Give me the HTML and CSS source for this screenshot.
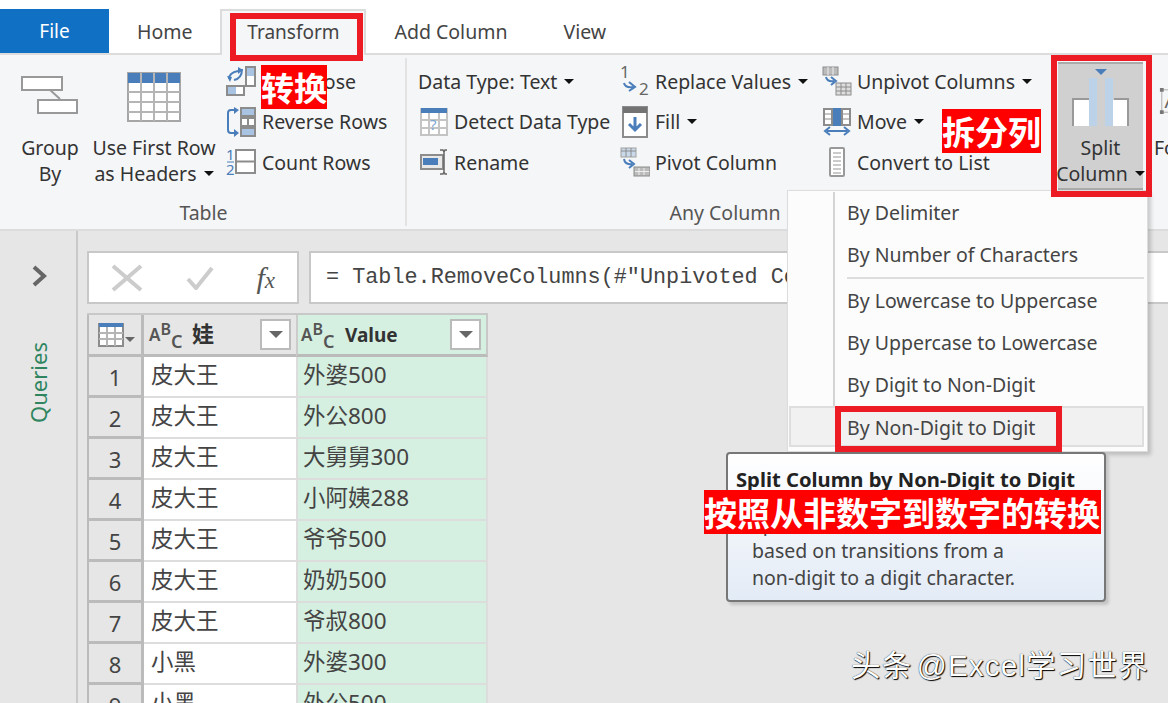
FILE: index.html
```html
<!DOCTYPE html>
<html lang="en">
<head>
<meta charset="utf-8">
<title>Split Column</title>
<link rel="stylesheet" href="styles.css">
</head>
<body>
<div class="app">
  <nav class="tabs">
    <div class="tab file">File</div>
    <div class="tab">Home</div>
    <div class="tab active">Transform</div>
    <div class="tab">Add Column</div>
    <div class="tab">View</div>
  </nav>

  <section class="ribbon">
    <div class="group table-group">
      <div class="group-body">
        <div class="big groupby">
          <div class="big-icon">
            <svg width="60" height="40" viewBox="0 0 60 40"><path d="M29 14 40 24" stroke="#999" stroke-width="2" fill="none"/><rect x="2" y="2" width="40" height="13" fill="#fff" stroke="#999" stroke-width="2"/><rect x="18" y="25" width="39" height="13" fill="#fff" stroke="#999" stroke-width="2"/></svg>
          </div>
          <div class="big-label">Group<br>By</div>
        </div>
        <div class="big firstrow">
          <div class="big-icon top">
            <svg width="54" height="50" viewBox="0 0 54 50"><rect x="1" y="1" width="52" height="48" fill="#fff" stroke="#a6a6a6" stroke-width="2"/><rect x="1" y="1" width="52" height="10" fill="#4a7ebb"/><path d="M14 1V49M27 1V49M40 1V49M1 20H53M1 30H53M1 40H53" stroke="#b5b5b5" stroke-width="2" fill="none"/></svg>
          </div>
          <div class="big-label">Use First Row<br>as Headers <i class="caret"></i></div>
        </div>
        <div class="col col-table">
          <div class="row">
            <svg class="ico" width="30" height="30" viewBox="0 0 30 30"><path d="M3 13C3 8 7 6 12 5M16 3C16 10 13 13 8 14" fill="none" stroke="#4a7ebb" stroke-width="2"/><path d="M12 1l5 3-5 4zM1 10l5 1-2 5z" fill="#4a7ebb"/><rect x="20" y="1" width="9" height="19" fill="#fff" stroke="#8c8c8c" stroke-width="2"/><rect x="21" y="2" width="7" height="8" fill="#a9c4e2"/><rect x="1" y="20" width="17" height="9" fill="#fff" stroke="#8c8c8c" stroke-width="2"/><rect x="2" y="21" width="8" height="7" fill="#a9c4e2"/></svg>
            <span>Transpose</span>
          </div>
          <div class="row">
            <svg class="ico" width="30" height="30" viewBox="0 0 30 30"><path d="M9 3H5Q2 3 2 6V23Q2 26 5 26H9" fill="none" stroke="#4a7ebb" stroke-width="2"/><path d="M8 0l5 3-5 4zM8 22l5 4-5 4z" fill="#4a7ebb"/><rect x="15" y="1" width="14" height="8" fill="#a9c4e2" stroke="#8c8c8c" stroke-width="2"/><rect x="15" y="11" width="14" height="8" fill="#fff" stroke="#8c8c8c" stroke-width="2"/><path d="M22 11V19" stroke="#8c8c8c" stroke-width="2"/><rect x="15" y="21" width="14" height="8" fill="#a9c4e2" stroke="#8c8c8c" stroke-width="2"/></svg>
            <span>Reverse Rows</span>
          </div>
          <div class="row">
            <svg class="ico" width="30" height="30" viewBox="0 0 30 30"><text x="0" y="13" class="ico-num">1</text><text x="0" y="28" class="ico-num">2</text><path d="M1 15H8" stroke="#4a7ebb" stroke-width="1"/><rect x="10" y="3" width="19" height="23" fill="#fff" stroke="#8c8c8c" stroke-width="2"/><path d="M10 14.500H29" stroke="#8c8c8c" stroke-width="2"/></svg>
            <span>Count Rows</span>
          </div>
        </div>
      </div>
      <div class="group-label">Table</div>
    </div>

    <div class="group any-group">
      <div class="group-body">
        <div class="col col-a">
          <div class="row"><span>Data Type: Text <i class="caret"></i></span></div>
          <div class="row">
            <svg class="ico narrow" width="28" height="30" viewBox="0 0 28 30"><rect x="1" y="2" width="26" height="26" fill="#fff" stroke="#c4c4c4" stroke-width="2"/><rect x="1" y="1" width="26" height="5" fill="#4a7ebb"/><path d="M9 6V28M19 6V28M1 13H27M1 21H27" stroke="#c4c4c4" stroke-width="2"/><text x="10" y="23" class="ico-q">?</text></svg>
            <span>Detect Data Type</span>
          </div>
          <div class="row">
            <svg class="ico narrow" width="28" height="26" viewBox="0 0 28 26"><rect x="1" y="6" width="22" height="14" fill="#e8e8e8" stroke="#8c8c8c" stroke-width="2"/><rect x="3" y="9" width="15" height="7" fill="#4a7ebb"/><path d="M20 1h3l1 2 1-2h2M24 3V23M20 25h3l1-2 1 2h2" fill="none" stroke="#666" stroke-width="1.500"/></svg>
            <span>Rename</span>
          </div>
        </div>
        <div class="col col-b">
          <div class="row">
            <svg class="ico" width="30" height="30" viewBox="0 0 30 30"><text x="0" y="12" class="ico-num grey">1</text><text x="19" y="29" class="ico-num grey">2</text><path d="M4 17Q5 22 13 21M9 16l6 5-6 4" fill="none" stroke="#4a7ebb" stroke-width="2"/></svg>
            <span>Replace Values <i class="caret"></i></span>
          </div>
          <div class="row">
            <svg class="ico" width="30" height="32" viewBox="0 0 26 32"><rect x="1" y="1" width="24" height="30" fill="#fff" stroke="#8c8c8c" stroke-width="2"/><rect x="1" y="1" width="24" height="6" fill="#737373"/><path d="M13 11V24M7 18l6 6 6-6" fill="none" stroke="#4a7ebb" stroke-width="3"/></svg>
            <span>Fill <i class="caret"></i></span>
          </div>
          <div class="row">
            <svg class="ico" width="30" height="30" viewBox="0 0 30 30"><rect x="1" y="1" width="15" height="9" fill="#c9d9ea" stroke="#a0a0a0"/><path d="M1 4H16M6 1V10M11 1V10" stroke="#8c8c8c"/><path d="M4 12Q5 18 12 17M9 13l5 4-5 4" fill="none" stroke="#4a7ebb" stroke-width="2"/><rect x="14" y="20" width="16" height="9" fill="#bbb" stroke="#8c8c8c"/><path d="M19 21V28M24 21V28M15 24.500H29" stroke="#eee"/></svg>
            <span>Pivot Column</span>
          </div>
        </div>
        <div class="col col-c">
          <div class="row">
            <svg class="ico" width="30" height="30" viewBox="0 0 30 30"><rect x="1" y="1" width="15" height="8" fill="#bbb" stroke="#8c8c8c"/><path d="M6 1V9M11 1V9" stroke="#eee"/><path d="M4 11Q5 16 12 15M9 11l5 4-5 4" fill="none" stroke="#4a7ebb" stroke-width="2"/><rect x="14" y="17" width="15" height="12" fill="#ddd" stroke="#8c8c8c"/><path d="M19 17V29M24 17V29M14 21H29M14 25H29" stroke="#8c8c8c"/></svg>
            <span>Unpivot Columns <i class="caret"></i></span>
          </div>
          <div class="row">
            <svg class="ico" width="30" height="30" viewBox="0 0 30 30"><path d="M2 2H10V18H2ZM20 2H28V18H20Z" fill="#fff" stroke="#8c8c8c" stroke-width="2"/><path d="M2 7H10M20 7H28M2 12H10M20 12H28" stroke="#8c8c8c"/><rect x="11" y="1" width="8" height="18" fill="#4a7ebb"/><path d="M5 24H25M8 20l-5 4 5 4M22 20l5 4-5 4" fill="none" stroke="#4a7ebb" stroke-width="2"/></svg>
            <span>Move <i class="caret"></i></span>
          </div>
          <div class="row">
            <svg class="ico" width="30" height="30" viewBox="0 0 30 30"><rect x="8" y="1" width="14" height="28" rx="1" fill="#fff" stroke="#999" stroke-width="2"/><path d="M11 6H19M11 10H19M11 14H19M11 18H19M11 22H19M11 26H19" stroke="#bbb" stroke-width="1.500"/></svg>
            <span>Convert to List</span>
          </div>
        </div>
      </div>
      <div class="group-label">Any Column</div>
    </div>

    <div class="split">
      <div class="big-icon">
        <svg width="60" height="60" viewBox="0 0 60 60"><path d="M24 0H36L30 6Z" fill="#4a7ebb"/><rect x="3" y="30" width="16" height="27" fill="#fff"/><path d="M2 57V30H19M57 57V30H43" fill="none" stroke="#999" stroke-width="2"/><rect x="41" y="31" width="15" height="26" fill="#fff"/><rect x="18" y="9" width="8" height="48" fill="#bcd2e8"/><rect x="34" y="9" width="8" height="48" fill="#bcd2e8"/></svg>
      </div>
      <div class="big-label">Split<br>Column <i class="caret"></i></div>
    </div>

    <div class="format">
      <svg class="format-icon" width="30" height="30" viewBox="0 0 30 30"><rect x="3" y="3" width="26" height="24" fill="none" stroke="#aaa"/><path d="M1 1h4v4H1zM1 25h4v4H1z" fill="#777"/><text x="6" y="23" class="format-a">A</text></svg>
      <div class="big-label">Format</div>
    </div>
  </section>

  <div class="work">
    <aside class="side">
      <svg class="chev" width="16" height="22" viewBox="0 0 16 22"><path d="M3 2 13 11 3 20" fill="none" stroke="#666" stroke-width="4"/></svg>
      <div class="queries">Queries</div>
    </aside>
    <main class="main">
      <div class="formula">
        <div class="fx-box">
          <svg width="32" height="28" viewBox="0 0 32 28"><path d="M2 2 30 26M30 2 2 26" stroke="#ccc" stroke-width="4" fill="none"/></svg>
          <svg width="28" height="24" viewBox="0 0 28 24"><path d="M2 13 10 22 26 2" stroke="#ccc" stroke-width="4" fill="none"/></svg>
          <span class="fx"><i>f</i><i class="x">x</i></span>
        </div>
        <div class="fx-input">= Table.RemoveColumns(#"Unpivoted Columns",{"属性"})</div>
      </div>
      <div class="grid">
        <div class="th corner">
          <svg width="26" height="24" viewBox="0 0 26 24"><rect x="1" y="1" width="24" height="22" fill="#fff" stroke="#8c8c8c" stroke-width="2"/><rect x="1" y="0" width="24" height="4" fill="#4a7ebb"/><path d="M9 4V23M17 4V23M1 10H25M1 16H25" stroke="#b5b5b5" stroke-width="2"/></svg>
          <i class="caret grey"></i>
        </div>
        <div class="th">
          <span class="abc">A<span class="b">B</span><span class="c">C</span></span>
          <span class="name cjk">娃</span>
          <span class="filter"><i class="caret wide"></i></span>
        </div>
        <div class="th value">
          <span class="abc">A<span class="b">B</span><span class="c">C</span></span>
          <span class="name">Value</span>
          <span class="filter"><i class="caret wide"></i></span>
        </div>

        <div class="num">1</div><div class="td">皮大王</div><div class="td val">外婆500</div>
        <div class="num">2</div><div class="td">皮大王</div><div class="td val">外公800</div>
        <div class="num">3</div><div class="td">皮大王</div><div class="td val">大舅舅300</div>
        <div class="num">4</div><div class="td">皮大王</div><div class="td val">小阿姨288</div>
        <div class="num">5</div><div class="td">皮大王</div><div class="td val">爷爷500</div>
        <div class="num">6</div><div class="td">皮大王</div><div class="td val">奶奶500</div>
        <div class="num">7</div><div class="td">皮大王</div><div class="td val">爷叔800</div>
        <div class="num">8</div><div class="td">小黑</div><div class="td val">外婆300</div>
        <div class="num">9</div><div class="td">小黑</div><div class="td val">外公500</div>
      </div>
    </main>
  </div>

  <div class="menu">
    <div class="item">By Delimiter</div>
    <div class="item">By Number of Characters</div>
    <div class="sep"><i></i></div>
    <div class="item">By Lowercase to Uppercase</div>
    <div class="item">By Uppercase to Lowercase</div>
    <div class="item">By Digit to Non-Digit</div>
    <div class="item hover">By Non-Digit to Digit</div>
  </div>

  <div class="tip">
    <div class="tip-title">Split Column by Non-Digit to Digit</div>
    <div class="tip-body">Split the selected column<br>based on transitions from a<br>non-digit to a digit character.</div>
  </div>

  <div class="box box-tab"></div>
  <div class="box box-split"></div>
  <div class="box box-item"></div>
  <div class="note note-1">转换</div>
  <div class="note note-2">拆分列</div>
  <div class="note note-3">按照从非数字到数字的转换</div>
  <div class="mark">头条 @Excel学习世界</div>
</div>
</body>
</html>
```
FILE: styles.css
```css
* { box-sizing: border-box; }
html, body { margin: 0; padding: 0; }
body { width: 1168px; height: 703px; overflow: hidden; background: #e6e6e6; }
.app {
  position: relative; width: 1168px; height: 703px; overflow: hidden;
  font-family: "Noto Sans", "Noto Sans CJK SC", sans-serif; font-size: 19.500px; color: #333;
  display: flex; flex-direction: column;
}
i { font-style: normal; }

.tabs { flex: none; height: 55px; padding-top: 9px; display: flex; background: #fff; border-bottom: 2px solid #dcdcdc; }
.tab { flex: none; padding: 0 28px; line-height: 45px; height: 44px; color: #444; }
.tab.file { width: 109px; padding: 0; text-align: center; background: #1070c4; color: #fff; font-size: 19px; }
.tab.active { width: 146px; padding: 0; text-align: center; height: 46px; line-height: 42px; background: #f5f6f7; border: 2px solid #dcdcdc; border-bottom: 0; font-size: 19px; }

.ribbon { flex: none; height: 176px; display: flex; background: #f5f6f7; border-bottom: 2px solid #dcdcdc; }
.group { flex: none; display: flex; flex-direction: column; }
.table-group { width: 407px; background: linear-gradient(#e3e3e3, #e3e3e3) no-repeat 405px 3px / 2px 168px; }
.table-group .group-body { padding-left: 21px; }
.any-group { width: 644px; }
.any-group .group-label { padding-right: 8px; }
.group-body { flex: 1; display: flex; min-height: 0; }
.group-label { flex: none; height: 32px; line-height: 32px; text-align: center; color: #555; }
.big { flex: none; display: flex; flex-direction: column; align-items: center; }
.big-icon { height: 80px; display: flex; align-items: center; justify-content: center; }
.big-icon.top { align-items: flex-start; padding-top: 17px; }
.big-label { line-height: 26px; text-align: center; white-space: nowrap; }
.groupby { width: 58px; }
.firstrow { width: 124px; margin-left: 13px; }
.col { flex: none; display: flex; flex-direction: column; padding-top: 6px; }
.col-table { margin-left: 10px; }
.row { height: 40.500px; display: flex; align-items: center; white-space: nowrap; }
.ico { flex: none; margin-right: 6px; }
.ico.narrow { margin: 0 6px 0 2px; }
.col-b .ico, .col-c .ico { margin-right: 5px; }
.ico-num { font: 15px "Noto Sans", sans-serif; fill: #4a7ebb; }
.ico-num.grey { fill: #666; font-size: 17px; }
.ico-q { font: 15px "Noto Sans", sans-serif; fill: #7da6d2; }
.col-a { width: 202px; margin-left: 11px; }
.col-b { width: 202px; }
.col-c { width: 215px; }
.caret {
  display: inline-block; width: 0; height: 0; vertical-align: 5px; margin-left: 2px;
  border-left: 5px solid transparent; border-right: 5px solid transparent; border-top: 5px solid #111;
}
.caret.grey { border-top-color: #666; margin: 10px 0 0 1px; vertical-align: 0; }
.caret.wide { border-left-width: 7px; border-right-width: 7px; border-top: 7px solid #666; margin: 0; vertical-align: 0; }

.split { flex: none; width: 85px; margin: 7px 0 0 7px; height: 128px; background: #d0d0d0; border-top: 2px solid #aaa; border-bottom: 2px solid #aaa; display: flex; flex-direction: column; align-items: center; }
.split .big-icon { height: 71px; padding-bottom: 1px; }
.format { flex: none; width: 40px; margin-left: 11px; overflow: hidden; display: flex; flex-direction: column; }
.format-icon { margin: 32px 0 0 4px; flex: none; height: 28px; }
.format-a { font: 22px "Noto Sans", sans-serif; fill: #666; }
.format .big-label { margin-top: 20px; text-align: left; }

.work { flex: 1; display: flex; min-height: 0; }
.side { flex: none; width: 78px; border-right: 2px solid #c9c9c9; display: flex; flex-direction: column; align-items: center; padding-top: 34px; }
.chev { flex: none; margin-left: 2px; }
.queries { margin-top: 55px; writing-mode: vertical-rl; transform: rotate(180deg); color: #2f8560; font-size: 22px; line-height: 30px; }
.main { flex: 1; padding: 20px 0 0 9px; min-width: 0; }
.formula { display: flex; gap: 10px; height: 53px; margin-bottom: 9px; margin-right: -4px; }
.fx-box { flex: none; width: 212px; background: #fff; border: 2px solid #c8c8c8; display: flex; align-items: center; padding: 0 22px 0 22px; justify-content: space-between; }
.fx { font: 30px "Liberation Serif", serif; color: #555; white-space: nowrap; }
.fx i { font-style: italic; }
.fx .x { font-size: 23px; }
.fx-input { flex: 1; min-width: 0; background: #fff; border: 2px solid #c8c8c8; padding-left: 15px; font: 21.800px/50px "Liberation Mono", monospace; color: #444; white-space: nowrap; overflow: hidden; }

.grid { display: grid; width: 401px; grid-template-columns: 57px 152px 192px; grid-auto-rows: 41px; grid-template-rows: 42px; border-top: 2px solid #c8c8c8; }
.th { background: #e6e6e6; border-bottom: 3px solid #bbb; display: flex; align-items: center; font-weight: 700; padding-left: 5px; }
.th.corner { padding-left: 9px; border-left: 2px solid #bbb; border-right: 3px solid #bbb; }
.th.value { background: #d5f0e1; border-left: 2px solid #ccc; border-right: 2px solid #c8c8c8; padding-left: 3px; }
.abc { font: 600 17px "Noto Sans", sans-serif; color: #555; width: 30px; white-space: nowrap; line-height: 20px; }
.abc .b { vertical-align: 6px; font-size: 16px; }
.abc .c { vertical-align: -7px; font-size: 18px; }
.name { margin-left: 14px; flex: 1; font-size: 19px; }
.name.cjk { font-size: 22px; margin: 0 0 5px 13px; }
.filter { flex: none; width: 31px; height: 31px; margin-right: 5px; background: #fff; border: 2px solid #bbb; display: flex; align-items: center; justify-content: center; }
.num { background: #e6e6e6; border-left: 2px solid #bbb; border-right: 3px solid #bbb; border-bottom: 3px solid #bbb; text-align: center; font-size: 22px; line-height: 40px; color: #444; }
.td { background: #fff; border-bottom: 2px solid #ddd; padding-left: 7px; font-size: 22.500px; line-height: 36px; color: #444; white-space: nowrap; }
.td.val { background: #d5f0e1; border-left: 2px solid #ddd; border-right: 2px solid #ddd; padding-left: 5px; }

.menu { position: absolute; left: 787px; top: 190px; width: 361px; height: 262px; background: #fcfcfc; border: 1px solid #ddd; box-shadow: 3px 3px 4px rgba(0,0,0,.18); padding-top: 1px; padding-right: 3px; color: #444; }
.item { height: 42px; line-height: 42px; margin-left: 45px; border-left: 2px solid #d4d4d4; padding-left: 12px; }
.sep { height: 4px; margin-left: 45px; border-left: 2px solid #d4d4d4; padding: 1px 0 0 12px; }
.sep i { display: block; height: 2px; background: #ddd; }
.item.hover { margin: 0 0 0 1px; height: 41px; line-height: 39px; background: #f1f1f1; border: 2px solid #dedede; padding-left: 56px; }

.tip { position: absolute; left: 726px; top: 452px; width: 380px; height: 150px; border: 2px solid #777; border-radius: 4px; background: linear-gradient(#fff, #e3ebf6); box-shadow: 3px 3px 3px rgba(0,0,0,.15); padding: 12px 8px; }
.tip-title { font-weight: 700; font-size: 20.200px; line-height: 26px; color: #222; white-space: nowrap; }
.tip-body { margin: 18px 0 0 16px; line-height: 27px; color: #444; white-space: nowrap; }

.box { position: absolute; border: 6px solid #ed1c24; }
.box-tab { left: 230px; top: 13px; width: 133px; height: 48px; }
.box-split { left: 1051px; top: 55px; width: 101px; height: 142px; }
.box-item { left: 835px; top: 406px; width: 227px; height: 46px; }

.note { position: absolute; background: #f00; color: #fff; font: 700 33px/44px "Noto Sans CJK SC", sans-serif; white-space: nowrap; }
.note-1 { left: 261px; top: 65px; width: 66px; }
.note-2 { left: 942px; top: 109px; width: 99px; }
.note-3 { left: 704px; top: 490px; width: 397px; }
.mark { position: absolute; left: 851px; top: 648px; color: #fff; font: 400 29.500px/36px "Liberation Sans", "Noto Sans CJK SC", sans-serif; letter-spacing: 1.200px; word-spacing: -5px; white-space: nowrap; text-shadow: 1px 1px 1px #000, 0 0 1px #000; }
```
